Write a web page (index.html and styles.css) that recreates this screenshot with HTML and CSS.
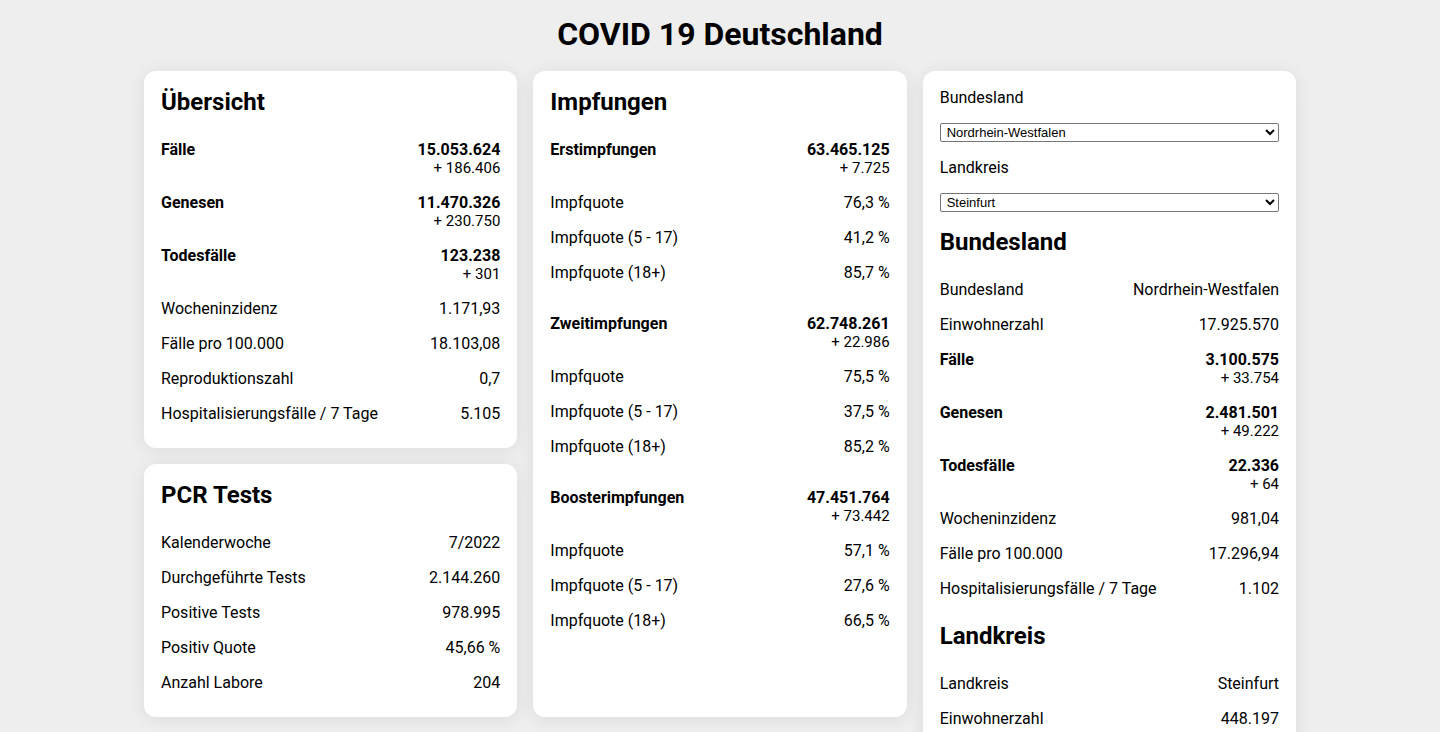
FILE: index.html
```html
<!DOCTYPE html>
<html lang="de">
<head>
<meta charset="utf-8">
<title>COVID 19 Deutschland</title>
<link rel="stylesheet" href="styles.css">
</head>
<body>
<h1 class="title">COVID 19 Deutschland</h1>
<main class="grid">
  <div class="pair">
    <div class="col">
      <section class="card">
        <h2>Übersicht</h2>
        <div class="rows">
          <div class="row strong"><span>Fälle</span><span class="val">15.053.624<span class="delta">+ 186.406</span></span></div>
          <div class="row strong"><span>Genesen</span><span class="val">11.470.326<span class="delta">+ 230.750</span></span></div>
          <div class="row strong"><span>Todesfälle</span><span class="val">123.238<span class="delta">+ 301</span></span></div>
          <div class="row"><span>Wocheninzidenz</span><span>1.171,93</span></div>
          <div class="row"><span>Fälle pro 100.000</span><span>18.103,08</span></div>
          <div class="row"><span>Reproduktionszahl</span><span>0,7</span></div>
          <div class="row"><span>Hospitalisierungsfälle / 7 Tage</span><span>5.105</span></div>
        </div>
      </section>
      <section class="card">
        <h2>PCR Tests</h2>
        <div class="rows">
          <div class="row"><span>Kalenderwoche</span><span>7/2022</span></div>
          <div class="row"><span>Durchgeführte Tests</span><span>2.144.260</span></div>
          <div class="row"><span>Positive Tests</span><span>978.995</span></div>
          <div class="row"><span>Positiv Quote</span><span>45,66 %</span></div>
          <div class="row"><span>Anzahl Labore</span><span>204</span></div>
        </div>
      </section>
    </div>
    <section class="card">
      <h2>Impfungen</h2>
      <div class="rows">
        <div class="row strong"><span>Erstimpfungen</span><span class="val">63.465.125<span class="delta">+ 7.725</span></span></div>
        <div class="row"><span>Impfquote</span><span>76,3 %</span></div>
        <div class="row"><span>Impfquote (5 - 17)</span><span>41,2 %</span></div>
        <div class="row"><span>Impfquote (18+)</span><span>85,7 %</span></div>
      </div>
      <div class="rows">
        <div class="row strong"><span>Zweitimpfungen</span><span class="val">62.748.261<span class="delta">+ 22.986</span></span></div>
        <div class="row"><span>Impfquote</span><span>75,5 %</span></div>
        <div class="row"><span>Impfquote (5 - 17)</span><span>37,5 %</span></div>
        <div class="row"><span>Impfquote (18+)</span><span>85,2 %</span></div>
      </div>
      <div class="rows">
        <div class="row strong"><span>Boosterimpfungen</span><span class="val">47.451.764<span class="delta">+ 73.442</span></span></div>
        <div class="row"><span>Impfquote</span><span>57,1 %</span></div>
        <div class="row"><span>Impfquote (5 - 17)</span><span>27,6 %</span></div>
        <div class="row"><span>Impfquote (18+)</span><span>66,5 %</span></div>
      </div>
    </section>
  </div>
  <section class="card regional">
    <label class="label" for="land">Bundesland</label>
    <select id="land" class="select"><option>Nordrhein-Westfalen</option></select>
    <label class="label" for="kreis">Landkreis</label>
    <select id="kreis" class="select"><option>Steinfurt</option></select>
    <h2>Bundesland</h2>
    <div class="rows">
      <div class="row"><span>Bundesland</span><span>Nordrhein-Westfalen</span></div>
      <div class="row"><span>Einwohnerzahl</span><span>17.925.570</span></div>
      <div class="row strong"><span>Fälle</span><span class="val">3.100.575<span class="delta">+ 33.754</span></span></div>
      <div class="row strong"><span>Genesen</span><span class="val">2.481.501<span class="delta">+ 49.222</span></span></div>
      <div class="row strong"><span>Todesfälle</span><span class="val">22.336<span class="delta">+ 64</span></span></div>
      <div class="row"><span>Wocheninzidenz</span><span>981,04</span></div>
      <div class="row"><span>Fälle pro 100.000</span><span>17.296,94</span></div>
      <div class="row"><span>Hospitalisierungsfälle / 7 Tage</span><span>1.102</span></div>
    </div>
    <h2>Landkreis</h2>
    <div class="rows">
      <div class="row"><span>Landkreis</span><span>Steinfurt</span></div>
      <div class="row"><span>Einwohnerzahl</span><span>448.197</span></div>
      <div class="row strong"><span>Fälle</span><span class="val">118.342<span class="delta">+ 1.524</span></span></div>
      <div class="row strong"><span>Genesen</span><span class="val">96.210<span class="delta">+ 2.011</span></span></div>
      <div class="row strong"><span>Todesfälle</span><span class="val">612<span class="delta">+ 2</span></span></div>
      <div class="row"><span>Wocheninzidenz</span><span>1.020,31</span></div>
      <div class="row"><span>Fälle pro 100.000</span><span>26.404,24</span></div>
    </div>
  </section>
</main>
</body>
</html>
```

FILE: styles.css
```css
* { box-sizing: border-box; }

html, body {
  margin: 0;
  padding: 0;
  background: #eeeeee;
  color: #000;
  font-family: Roboto, "Liberation Sans", Arial, sans-serif;
  font-size: 16px;
}

.title {
  margin: 0;
  padding: 16px 0 0;
  font-size: 32px;
  line-height: 37.5px;
  font-weight: 700;
  text-align: center;
}

.grid {
  width: 1152px;
  margin: 17.5px auto 0;
  display: grid;
  grid-template-columns: repeat(3, minmax(0, 1fr));
  gap: 16px;
  align-items: start;
}

.pair {
  grid-column: span 2;
  display: grid;
  grid-template-columns: repeat(2, minmax(0, 1fr));
  gap: 16px;
  align-items: stretch;
}

.col {
  display: flex;
  flex-direction: column;
  gap: 16px;
}

.card {
  background: #fff;
  border-radius: 12px;
  box-shadow: 0 2px 18px rgba(0, 0, 0, 0.08);
  padding: 17px;
  display: flex;
  flex-direction: column;
  gap: 16px;
}

.card h2 {
  margin: 0;
  font-size: 24px;
  line-height: 28px;
  font-weight: 700;
}

.rows {
  display: flex;
  flex-direction: column;
}

.row {
  display: flex;
  justify-content: space-between;
  align-items: flex-start;
  padding: 8px 0;
  line-height: 19px;
}

.row.strong {
  font-weight: 700;
}

.val {
  display: flex;
  flex-direction: column;
  align-items: flex-end;
}

.delta {
  font-weight: 400;
  font-size: 15px;
  line-height: 18px;
}

.label {
  display: block;
  line-height: 19px;
}

.select {
  display: block;
  width: 100%;
  height: 19px;
  margin: 0;
  padding: 0 2px;
  font-family: "Liberation Sans", Arial, sans-serif;
  font-size: 13px;
  color: #000;
  background: #fff;
  border: 1px solid #767676;
  border-radius: 2px;
}
```
